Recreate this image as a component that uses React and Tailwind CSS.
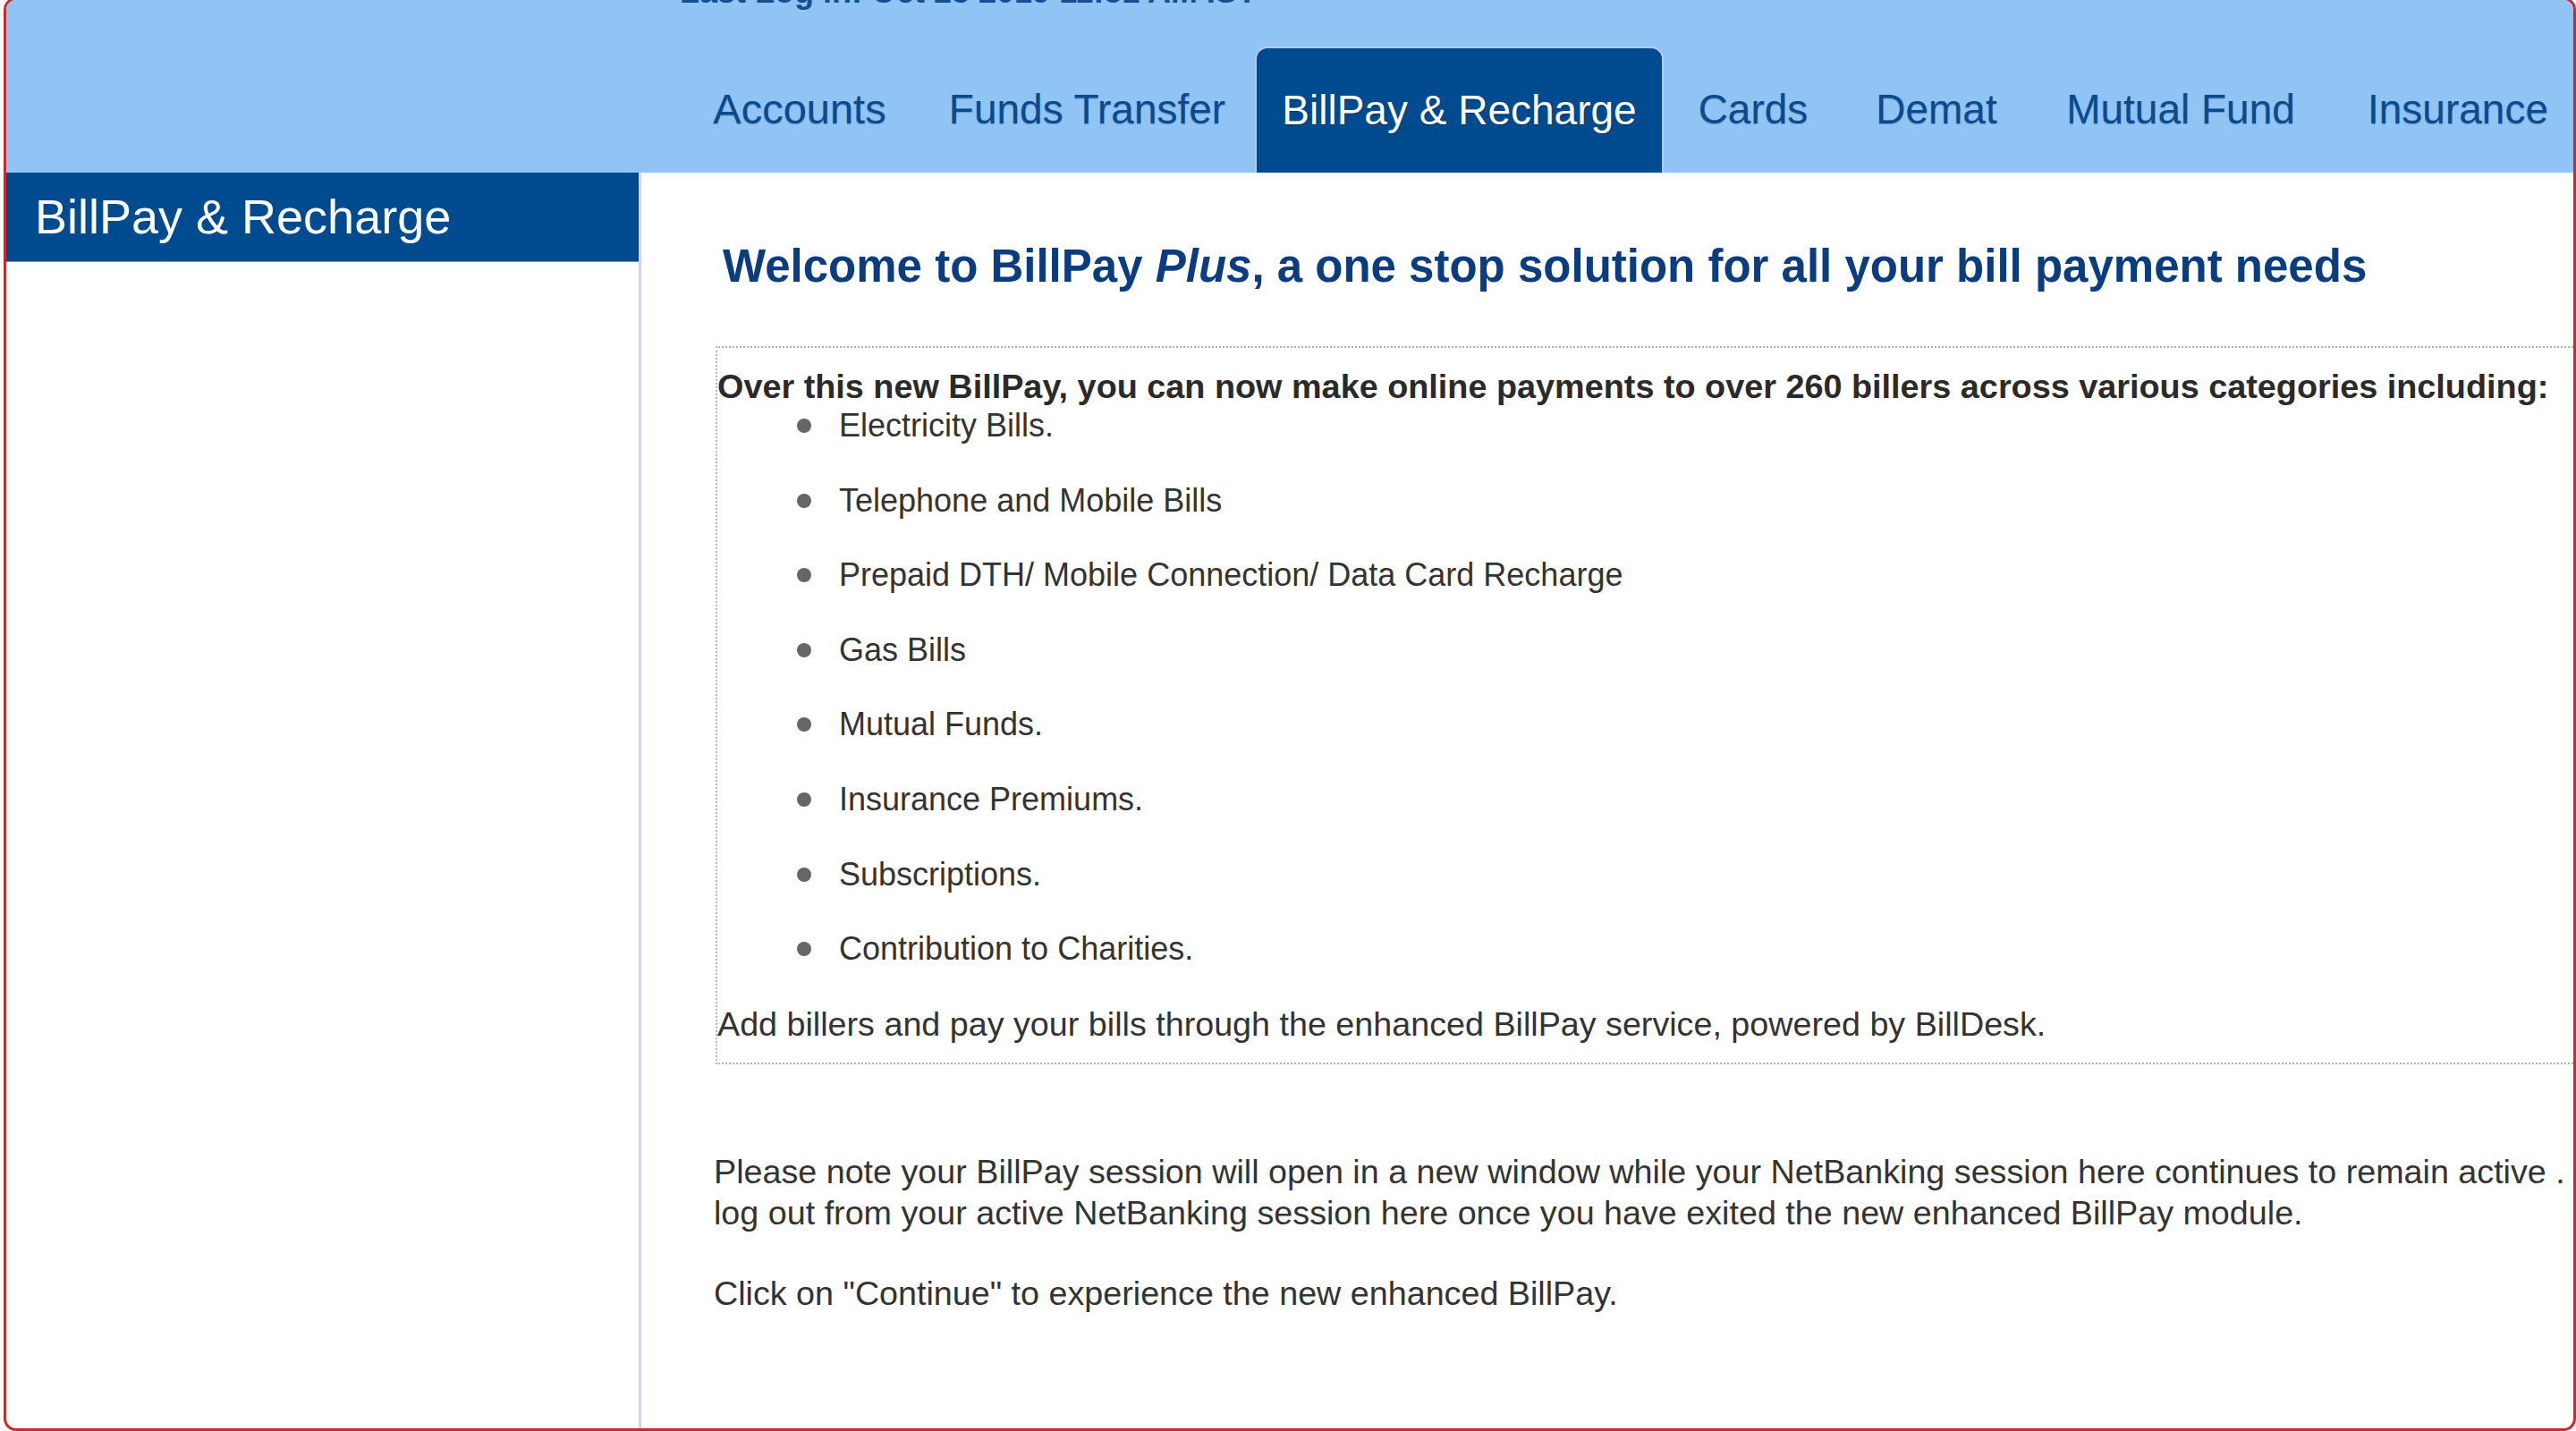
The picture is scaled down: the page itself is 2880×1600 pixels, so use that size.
import React from 'react';

const tabs = [
    { label: 'Accounts', w: 'w-[268px]', size: 'text-[47px]' },
    { label: 'Funds Transfer', w: 'w-[375px]', size: 'text-[46px]' },
    { label: 'BillPay & Recharge', w: 'w-[457px]', size: 'text-[46px]', active: true },
    { label: 'Cards', w: 'w-[200px]', size: 'text-[46px]' },
    { label: 'Demat', w: 'w-[210px]', size: 'text-[46px]' },
    { label: 'Mutual Fund', w: 'w-[336px]', size: 'text-[46px]' },
    { label: 'Insurance', w: 'w-[284px]', size: 'text-[46px]' },
];

const billers = [
    'Electricity Bills.',
    'Telephone and Mobile Bills',
    'Prepaid DTH/ Mobile Connection/ Data Card Recharge',
    'Gas Bills',
    'Mutual Funds.',
    'Insurance Premiums.',
    'Subscriptions.',
    'Contribution to Charities.',
];

const App = () => {
    return (
        <div className="w-[2880px] h-[1600px] overflow-hidden bg-white font-['Liberation_Sans',Arial,sans-serif]">
            <div className="ml-[4px] -mt-[3px] w-[2876px] h-[1603px] border-[3px] border-[#c82a32] rounded-[14px] overflow-hidden flex flex-col">
                {/* Top bar with tabs */}
                <div className="h-[193px] shrink-0 bg-[#90c4f4] flex flex-col">
                    <div className="-mt-[28px] pl-[753px] h-[38px] leading-[38px] text-[36px] font-bold text-[#124f93] whitespace-nowrap">
                        Last Log in: Oct 25 2019 11:51 AM IST
                    </div>
                    <div className="mt-auto flex items-end h-[141px] pl-[753px]">
                        {tabs.map((tab) => (
                            tab.active ? (
                                <div
                                    key={tab.label}
                                    className={`${tab.w} ${tab.size} h-[141px] shrink-0 bg-[#004b8f] rounded-t-[14px] border-2 border-b-0 border-[#b4cbe3] flex items-center justify-center text-white whitespace-nowrap [text-shadow:0_1px_2px_rgba(0,0,0,0.35)]`}
                                >
                                    {tab.label}
                                </div>
                            ) : (
                                <div
                                    key={tab.label}
                                    className={`${tab.w} ${tab.size} h-[141px] shrink-0 flex items-center justify-center text-[#0b4a8e] whitespace-nowrap [text-shadow:0_1px_1px_rgba(0,40,100,0.3)]`}
                                >
                                    {tab.label}
                                </div>
                            )
                        ))}
                    </div>
                </div>

                <div className="flex flex-1 min-h-0">
                    {/* Sidebar */}
                    <div className="w-[710px] shrink-0 border-r-[3px] border-[#d0d5e5]">
                        <div className="h-[100px] bg-[#004b8f] border-b border-[#6f95c0] flex items-center pl-[32px] text-[54px] text-white whitespace-nowrap">
                            BillPay &amp; Recharge
                        </div>
                    </div>

                    {/* Main content */}
                    <div className="flex-1 min-w-0 text-[#333]">
                        <h1 className="mt-[75px] ml-[91px] text-[51px] leading-[60px] font-bold text-[#0a3d80] whitespace-nowrap">
                            Welcome to BillPay <i>Plus</i>, a one stop solution for all your bill payment needs
                        </h1>

                        <div className="mt-[59px] ml-[83px] -mr-[40px] border-2 border-dotted border-[#b5b5b5] pt-[21px] pb-[21px] leading-[44px] whitespace-nowrap">
                            <p className="font-bold text-[37.8px] text-[#2a2a2a]">
                                Over this new BillPay, you can now make online payments to over 260 billers across various categories including:
                            </p>
                            <ul className="text-[36px]">
                                {billers.map((b) => (
                                    <li key={b} className="h-[83.6px] flex items-start">
                                        <span className="h-[44px] flex items-center ml-[89px] mr-[31px]">
                                            <span className="block w-[16px] h-[16px] rounded-full bg-[#666]"></span>
                                        </span>
                                        <span>{b}</span>
                                    </li>
                                ))}
                            </ul>
                            <p className="text-[37.7px]">Add billers and pay your bills through the enhanced BillPay service, powered by BillDesk.</p>
                        </div>

                        <p className="mt-[97px] ml-[81px] text-[37.7px] leading-[46px] whitespace-nowrap">
                            Please note your BillPay session will open in a new window while your NetBanking session here continues to remain active .
                            <br />
                            log out from your active NetBanking session here once you have exited the new enhanced BillPay module.
                        </p>
                        <p className="mt-[44px] ml-[81px] text-[37.7px] leading-[46px] whitespace-nowrap">
                            Click on "Continue" to experience the new enhanced BillPay.
                        </p>
                    </div>
                </div>
            </div>
        </div>
    );
};

export default App;
